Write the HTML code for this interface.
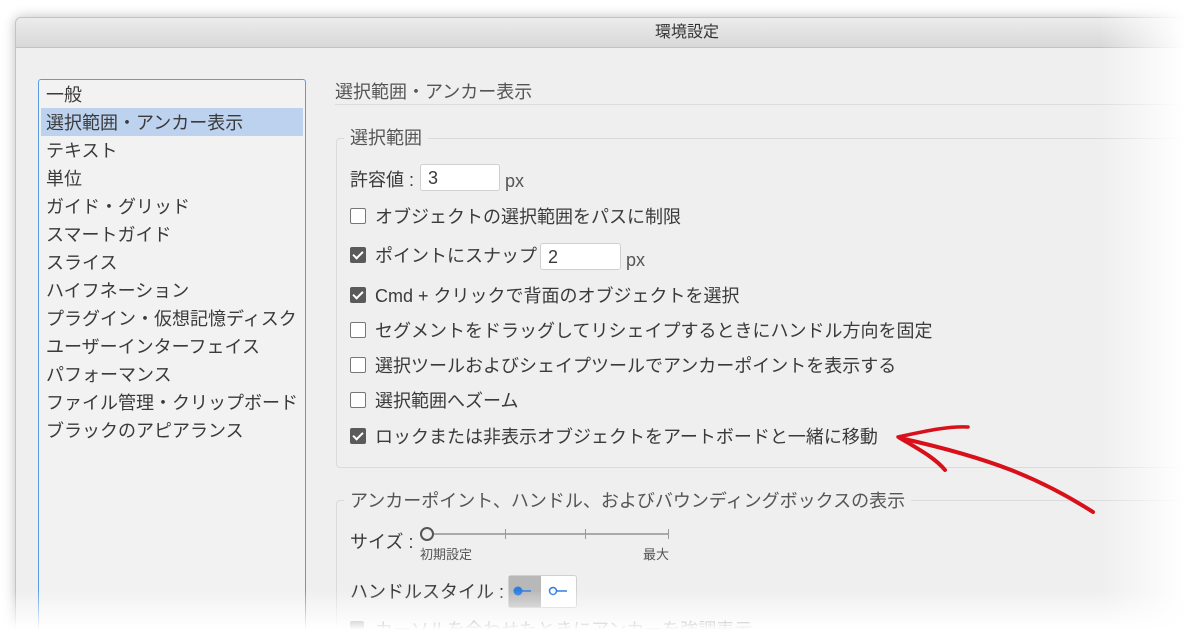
<!DOCTYPE html>
<html style="width:1200px;height:637px;overflow:hidden"><head><meta charset="utf-8"><style>
body{margin:0;width:1200px;height:637px;overflow:hidden;background:#fff;font-family:"Liberation Sans","Noto Sans CJK JP",sans-serif;color:#3a3a3a;position:relative}
.clip{position:absolute;left:0;top:0;width:1200px;height:637px;overflow:hidden}
.win{position:absolute;left:15px;top:17px;width:1180px;height:618px;background:#efefef;border:1px solid #c4c4c4;border-bottom:none;border-right:none;border-radius:6px 6px 0 0;box-shadow:0 0 12px rgba(0,0,0,.25)}
.tb{position:absolute;left:16px;top:18px;width:1180px;height:29px;background:linear-gradient(#ececec,#d8d8d8);border-bottom:1px solid #c2c2c2;border-radius:6px 6px 0 0}
.t{position:absolute;font-size:18px;white-space:nowrap;line-height:20px}
.side{position:absolute;left:38px;top:79px;width:266px;height:556px;background:#f2f2f2;border:1px solid #5b9be6;border-bottom:none;border-radius:3px 3px 0 0}
.side div{height:28px;line-height:30px;padding-left:7px;font-size:18px;color:#3a3a3a}
.side .sel{background:#bcd2ee;margin:0 2px;padding-left:5px}
.cb{position:absolute;width:14px;height:14px;border:1px solid #777;border-radius:2px;background:#fff;left:350px}
.cb.on{background:#5a5a5a;border-color:#5a5a5a}
.cb.on:after{content:"";position:absolute;left:4px;top:1px;width:4px;height:8px;border:solid #fff;border-width:0 2px 2px 0;transform:rotate(45deg)}
.inp{position:absolute;background:#fff;border:1px solid #d0d0d0;border-radius:3px;height:27px;font-size:18px;line-height:27px;padding-left:7px;box-sizing:border-box}
.grp{position:absolute;border:1px solid #dadada;border-right:none;border-radius:4px 0 0 4px}
.fade{position:absolute;pointer-events:none}
</style></head><body><div class="clip">
<div class="win"></div>
<div class="tb"></div>
<div class="t" style="left:655px;top:23px;font-size:16px;color:#333">環境設定</div>
<div class="side">
<div>一般</div><div class="sel">選択範囲・アンカー表示</div><div>テキスト</div><div>単位</div><div>ガイド・グリッド</div><div>スマートガイド</div><div>スライス</div><div>ハイフネーション</div><div>プラグイン・仮想記憶ディスク</div><div>ユーザーインターフェイス</div><div>パフォーマンス</div><div>ファイル管理・クリップボード</div><div>ブラックのアピアランス</div>
</div>
<div class="t" style="left:335px;top:82px;color:#555">選択範囲・アンカー表示</div>
<div style="position:absolute;left:335px;top:104px;width:860px;height:1px;background:#dcdcdc"></div>
<div class="grp" style="left:336px;top:138px;width:858px;height:328px"></div>
<div class="t" style="left:344px;top:128px;background:#efefef;padding:0 6px;color:#555">選択範囲</div>
<div class="t" style="left:350px;top:170px">許容値 :</div>
<div class="inp" style="left:420px;top:164px;width:80px">3</div>
<div class="t" style="left:505px;top:171px;color:#555">px</div>
<div class="cb" style="top:208px"></div><div class="t" style="left:375px;top:207px">オブジェクトの選択範囲をパスに制限</div>
<div class="cb on" style="top:247px"></div><div class="t" style="left:375px;top:246px">ポイントにスナップ</div>
<div class="inp" style="left:540px;top:243px;width:81px">2</div>
<div class="t" style="left:626px;top:250px;color:#555">px</div>
<div class="cb on" style="top:287px"></div><div class="t" style="left:375px;top:286px">Cmd + クリックで背面のオブジェクトを選択</div>
<div class="cb" style="top:322px"></div><div class="t" style="left:375px;top:321px">セグメントをドラッグしてリシェイプするときにハンドル方向を固定</div>
<div class="cb" style="top:357px"></div><div class="t" style="left:375px;top:356px">選択ツールおよびシェイプツールでアンカーポイントを表示する</div>
<div class="cb" style="top:392px"></div><div class="t" style="left:375px;top:391px">選択範囲へズーム</div>
<div class="cb on" style="top:428px"></div><div class="t" style="left:375px;top:427px">ロックまたは非表示オブジェクトをアートボードと一緒に移動</div>
<div class="grp" style="left:336px;top:500px;width:858px;height:136px;border-bottom:none"></div>
<div class="t" style="left:344px;top:491px;background:#efefef;padding:0 6px;color:#555">アンカーポイント、ハンドル、およびバウンディングボックスの表示</div>
<div class="t" style="left:350px;top:532px">サイズ :</div>
<div style="position:absolute;left:428px;top:533px;width:241px;height:2px;background:#aaa"></div>
<div style="position:absolute;left:505px;top:529px;width:1px;height:10px;background:#999"></div>
<div style="position:absolute;left:585px;top:529px;width:1px;height:10px;background:#999"></div>
<div style="position:absolute;left:668px;top:529px;width:1px;height:10px;background:#999"></div>
<div style="position:absolute;left:420px;top:527px;width:10px;height:10px;border:2px solid #555;border-radius:50%;background:#efefef"></div>
<div class="t" style="left:420px;top:545px;font-size:13px;color:#555">初期設定</div>
<div class="t" style="left:643px;top:545px;font-size:13px;color:#555">最大</div>
<div class="t" style="left:350px;top:582px">ハンドルスタイル :</div>
<div style="position:absolute;left:508px;top:575px;width:67px;height:31px;border:1px solid #d0d0d0;border-radius:3px;background:#fff"></div>
<div style="position:absolute;left:509px;top:576px;width:32px;height:31px;background:#b8b8b8"></div>
<svg style="position:absolute;left:0;top:0" width="1200" height="637">
<circle cx="518" cy="591" r="4.5" fill="#2b7de0"/><line x1="522" y1="591" x2="531" y2="591" stroke="#2b7de0" stroke-width="1.5"/>
<circle cx="553" cy="591" r="3.5" fill="#fff" stroke="#2b7de0" stroke-width="1.5"/><line x1="556" y1="591" x2="567" y2="591" stroke="#2b7de0" stroke-width="1.5"/>
<rect x="350" y="621" width="14" height="14" fill="#5a5a5a" rx="2"/>
<text x="375" y="636" font-size="18" fill="#3a3a3a" font-family="Liberation Sans, Noto Sans CJK JP, sans-serif">カーソルを合わせたときにアンカーを強調表示</text>
<path d="M1093 512 C1040 478 990 458 900 438" stroke="#d8101a" stroke-width="4" fill="none" stroke-linecap="round"/>
<path d="M898 437 C930 430 950 426 968 427" stroke="#d8101a" stroke-width="3.5" fill="none" stroke-linecap="round"/>
<path d="M900 438 C920 450 935 458 945 470" stroke="#d8101a" stroke-width="4" fill="none" stroke-linecap="round"/>
</svg>
<div class="fade" style="left:1100px;top:0;width:100px;height:637px;background:linear-gradient(90deg,rgba(255,255,255,0),#fff 85%)"></div>
<div class="fade" style="left:0;top:590px;width:1200px;height:47px;background:linear-gradient(rgba(255,255,255,0),#fff 85%)"></div>
</div></body></html>
